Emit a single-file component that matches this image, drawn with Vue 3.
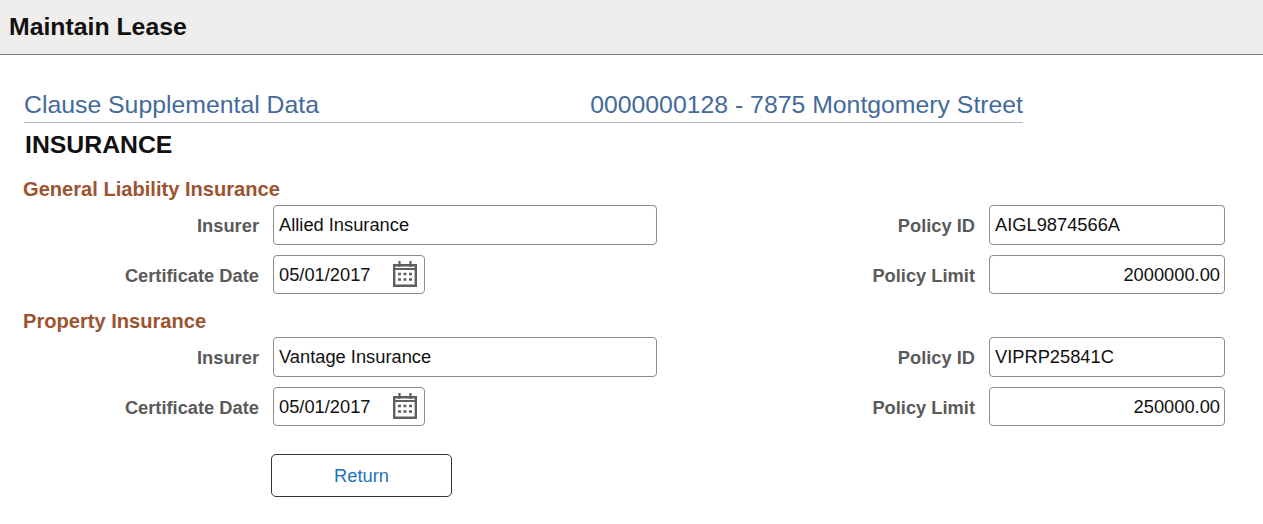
<script setup>
const sections = [
  {
    title: "General Liability Insurance",
    insurer: "Allied Insurance",
    date: "05/01/2017",
    policyId: "AIGL9874566A",
    limit: "2000000.00",
  },
  {
    title: "Property Insurance",
    insurer: "Vantage Insurance",
    date: "05/01/2017",
    policyId: "VIPRP25841C",
    limit: "250000.00",
  },
];
</script>

<template>
  <div class="page">
    <header class="header">
      <h1 class="h1">Maintain Lease</h1>
    </header>

    <div class="content">
      <div class="title-row">
        <span class="title-left">Clause Supplemental Data</span>
        <span class="title-right">0000000128 - 7875 Montgomery Street</span>
      </div>
      <h2 class="h2">INSURANCE</h2>

      <section class="section" v-for="item in sections" :key="item.title">
        <h3 class="h3">{{ item.title }}</h3>
        <div class="grid">
          <label class="label">Insurer</label>
          <div class="field field-wide">{{ item.insurer }}</div>
          <label class="label label-right">Policy ID</label>
          <div class="field field-right">{{ item.policyId }}</div>

          <label class="label">Certificate Date</label>
          <div class="field field-date">
            <span>{{ item.date }}</span>
            <svg class="cal" width="24" height="26" viewBox="0 0 24 26" fill="none" stroke="#5f5f5f">
              <path stroke-width="2.4" d="M1.2 4.2h21.6v20.6H1.2z" />
              <path stroke-width="2" d="M1 8h22" />
              <path stroke-width="2.2" d="M6.5 0v6M17.5 0v6" />
              <path stroke-width="2.4" d="M5 13h3M10.5 13h3M16 13h3M5 18.5h3M10.5 18.5h3M16 18.5h3" />
            </svg>
          </div>
          <label class="label label-right">Policy Limit</label>
          <div class="field field-right field-num">{{ item.limit }}</div>
        </div>
      </section>

      <button class="btn">Return</button>
    </div>
  </div>
</template>

<style scoped>
.page {
  font-family: "Liberation Sans", Arial, sans-serif;
  background-color: white;
  height: 524px;
  overflow: hidden;
}

.header {
  height: 54px;
  background-color: #efeeec;
  border-bottom: 1px solid #7f7f7f;
  display: flex;
  align-items: center;
  padding-left: 9px;
}

.h1 {
  margin: 0;
  font-size: 24.8px;
  font-weight: bold;
  color: #111;
}

.content {
  padding: 35px 0 0 0;
}

.title-row {
  margin-left: 24px;
  width: 999px;
  height: 30px;
  padding-bottom: 2px;
  display: flex;
  justify-content: space-between;
  align-items: center;
  border-bottom: 1px solid #b4b4b4;
  font-size: 24.8px;
  color: #436a9b;
}

.h2 {
  margin: 0 0 0 25px;
  height: 44px;
  line-height: 43px;
  font-size: 24.8px;
  font-weight: bold;
  color: #111;
}

.section {
  margin-bottom: 16px;
}

.section:first-of-type {
  margin-top: 11px;
}

.h3 {
  margin: 0 0 0 23px;
  height: 22px;
  line-height: 22px;
  font-size: 20.1px;
  font-weight: bold;
  color: #9c5330;
}

.grid {
  display: grid;
  grid-template-columns: 259px 384px 304px 236px;
  column-gap: 14px;
  row-gap: 10px;
  grid-template-rows: 40px 39px;
  margin-top: 5px;
  align-items: center;
}

.label {
  padding-top: 2px;
  text-align: right;
  font-size: 18.3px;
  font-weight: bold;
  color: #5a5a5a;
}

.field {
  box-sizing: border-box;
  height: 100%;
  border: 1px solid #8c8c8c;
  border-radius: 4px;
  display: flex;
  align-items: center;
  padding: 0 5px;
  font-size: 18.3px;
  color: #111;
}

.field-date {
  width: 152px;
  justify-content: space-between;
  padding-right: 7px;
}

.field-num {
  justify-content: flex-end;
  padding-right: 4px;
}

.cal {
  display: block;
  margin-top: -2px;
}

.btn {
  display: block;
  box-sizing: border-box;
  margin: 28px 0 0 271px;
  width: 181px;
  height: 43px;
  background-color: white;
  border: 1px solid #333;
  border-radius: 5px;
  font-family: inherit;
  font-size: 18.3px;
  color: #2272bd;
}
</style>
